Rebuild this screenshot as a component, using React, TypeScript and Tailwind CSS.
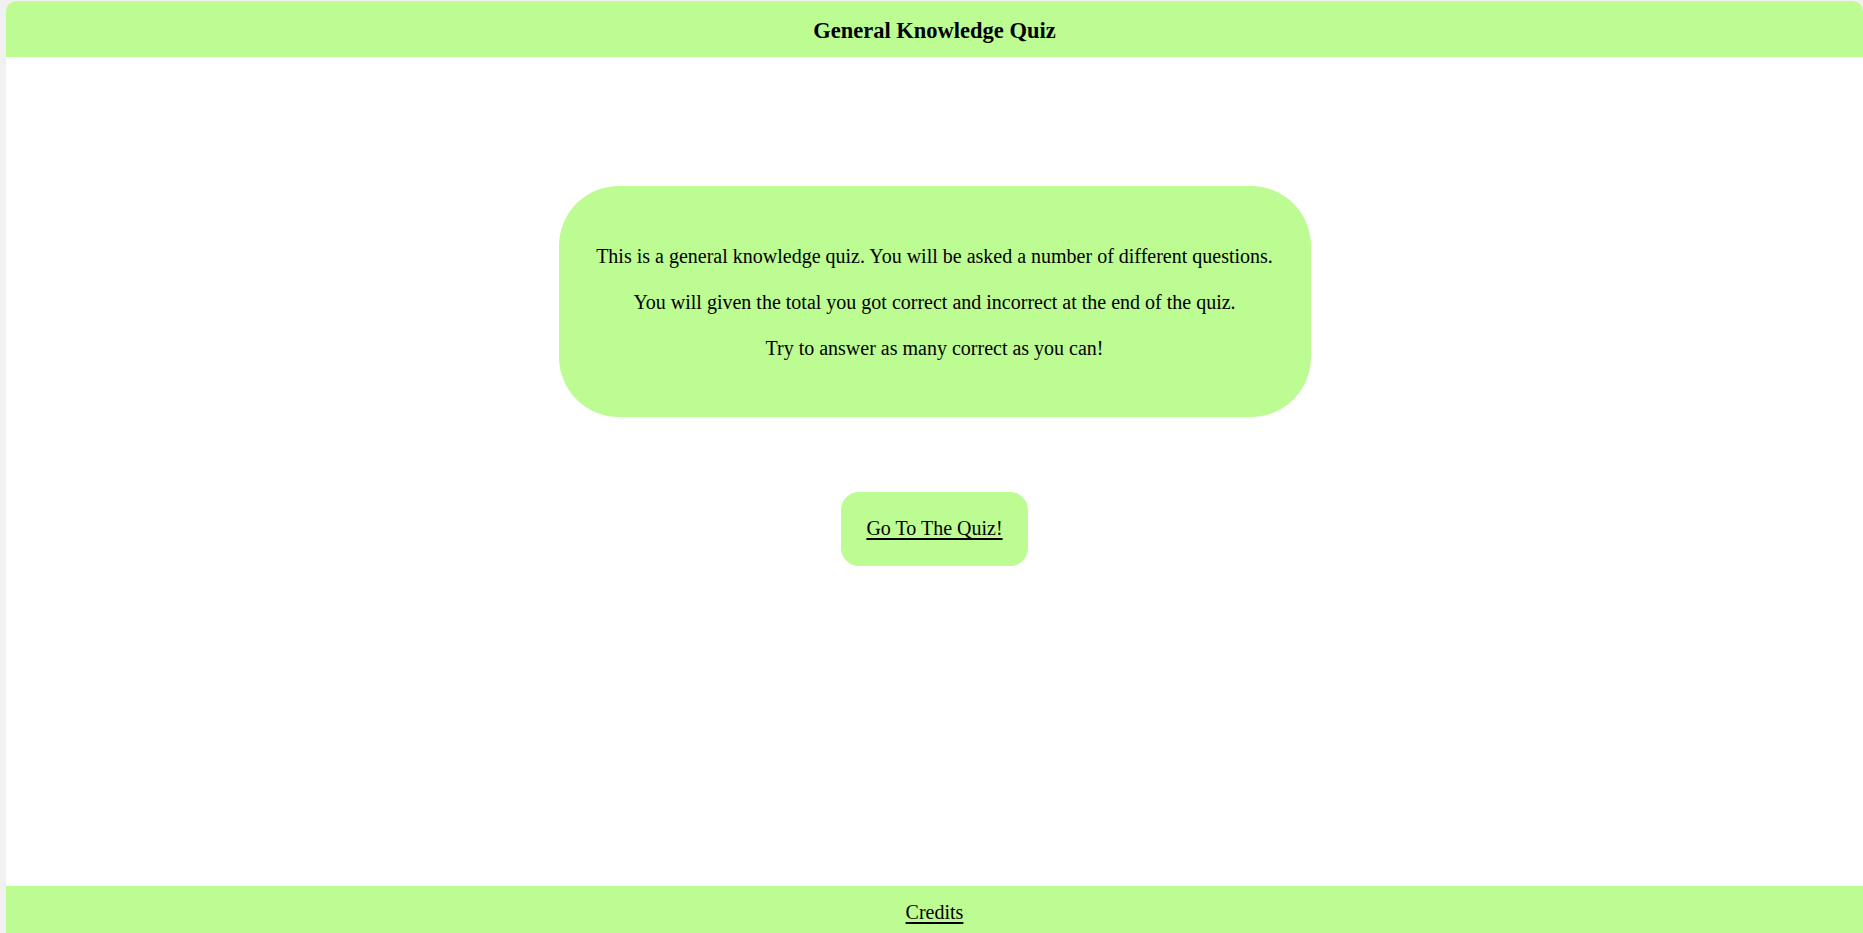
import React from 'react';

const serif = { fontFamily: '"Liberation Serif", "Times New Roman", serif' };

const App: React.FC = () => {
  return (
    <div className="h-screen w-full bg-[#f1f1f1] flex pl-[6px] pt-[1px]" style={serif}>
      <div className="flex-1 flex flex-col bg-white rounded-t-[10px] overflow-hidden text-black">
        {/* Header */}
        <header className="h-[56px] shrink-0 bg-[#bcfc93] flex items-center justify-center pt-[4px]">
          <h1 className="text-[22.5px] font-bold leading-none">General Knowledge Quiz</h1>
        </header>

        {/* Main */}
        <main className="flex-1 flex flex-col items-center pt-[129px]">
          <div className="w-[752px] bg-[#bcfc93] rounded-[60px] pt-[59px] pb-[57px] flex flex-col gap-[23px] text-center text-[20px] leading-[23px]">
            <p>This is a general knowledge quiz. You will be asked a number of different questions.</p>
            <p>You will given the total you got correct and incorrect at the end of the quiz.</p>
            <p>Try to answer as many correct as you can!</p>
          </div>

          <a
            href="#"
            className="mt-[75px] bg-[#bcfc93] rounded-[18px] px-[25px] pt-[25px] pb-[26px] text-[20px] leading-[23px] underline underline-offset-[3px]"
          >
            Go To The Quiz!
          </a>
        </main>

        {/* Footer */}
        <footer className="h-[47px] shrink-0 bg-[#bcfc93] flex justify-center pt-[15px]">
          <a href="#" className="text-[20px] leading-[23px] underline underline-offset-[3px]">
            Credits
          </a>
        </footer>
      </div>
    </div>
  );
};

export default App;
